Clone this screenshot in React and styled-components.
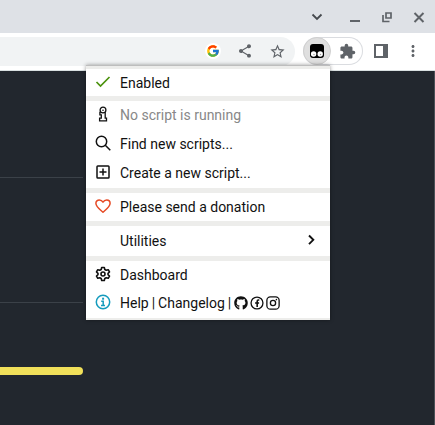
import React from "react";
import styled, { createGlobalStyle, css } from "styled-components";
import { FcGoogle } from "react-icons/fc";
import { MdShare, MdStarBorder, MdExtension, MdMoreVert } from "react-icons/md";
import { FaGithub } from "react-icons/fa";

const GlobalStyle = createGlobalStyle`
  *, *::before, *::after { box-sizing: border-box; }
  body { margin: 0; font-family: Roboto, "Liberation Sans", sans-serif; }
  button { font: inherit; color: inherit; background: none; border: 0; padding: 0; cursor: pointer; }
  a { color: inherit; text-decoration: none; }
  svg { display: block; flex: none; }
`;

const Window = styled.div`
  display: flex;
  flex-direction: column;
  min-height: 100vh;
  background: #22272e;
`;

const TitleBar = styled.header`
  display: flex;
  justify-content: flex-end;
  height: 33px;
  background: #dee1e6;
  color: #5f6368;
`;

const WindowButton = styled.button`
  display: grid;
  place-items: center;
  width: 32px;
  height: 33px;
  margin-right: ${(p) => (p.$spaced ? "6px" : 0)};
  color: ${(p) => (p.$spaced ? "#45494e" : "inherit")};
`;

const Toolbar = styled.div`
  position: relative;
  z-index: 1;
  display: flex;
  align-items: center;
  height: 38px;
  padding: 0 6px 1px 0;
  background: #fff;
  border-bottom: 1px solid #d9e0e1;
  color: #5f6368;
`;

const AddressBar = styled.div`
  display: flex;
  flex: 1;
  align-items: center;
  justify-content: flex-end;
  height: 29px;
  padding-right: 2px;
  background: #f1f3f4;
  border-radius: 0 15px 15px 0;
`;

const IconButton = styled.button`
  display: grid;
  place-items: center;
  width: 32px;
  height: 28px;
`;

const GoogleBadge = styled.span`
  display: grid;
  place-items: center;
  width: 16px;
  height: 16px;
  border-radius: 50%;
  background: #fff;
`;

const Extensions = styled.div`
  display: flex;
  height: 28px;
  margin: 0 2px 0 8px;
  border-radius: 14px;
  box-shadow: inset 0 0 0 1px #dadce0;
`;

const ExtensionButton = styled.button`
  display: grid;
  place-items: center;
  width: ${(p) => (p.$active ? "28px" : "32px")};
  height: 28px;
  border-radius: 50%;
  ${(p) => p.$active && css`
    background: #dfdfdf;
    border: 1px solid #cfcfcf;
  `}
`;

const Menu = styled.nav`
  position: absolute;
  top: 32px;
  right: 105px;
  display: flex;
  flex-direction: column;
  gap: 5px;
  width: 244px;
  padding: 3px 0 2px;
  background: #ededeb;
  border-top: 1px solid #bdbdbd;
  box-shadow: 0 0 4px rgba(0, 0, 0, 0.4);
  color: #111;
  font-size: 14px;
  line-height: 20px;
`;

const MenuGroup = styled.div`
  display: flex;
  flex-direction: column;
  gap: ${(p) => (p.$spaced ? "1px" : 0)};
  padding: ${(p) => (p.$roomy ? "1px 0" : p.$spaced ? "0 0 1px" : 0)};
  background: #fff;

  &:last-child { padding-bottom: 1px; }
`;

const rowStyle = css`
  display: grid;
  grid-template-columns: 16px 1fr auto;
  column-gap: 9px;
  align-items: center;
  width: 100%;
  height: ${(p) => (p.$short ? "27px" : "28px")};
  padding: 0 11px 0 9px;
  text-align: left;
  white-space: nowrap;
`;

const MenuItem = styled.button`
  ${rowStyle}
  &:disabled { color: #888; cursor: default; }
`;

const LinkRow = styled.div`
  ${rowStyle}
`;

const ItemIcon = styled.span`
  display: grid;
  place-items: center;
  width: 16px;
  height: 16px;
  margin-bottom: 2px;
  color: ${(p) => p.$color || "#111"};
`;

const Links = styled.span`
  display: flex;
  align-items: center;
`;

const Bar = styled.span`
  padding: 0 3px;
`;

const SocialLink = styled.a`
  margin-right: 2px;
`;

const Page = styled.main`
  flex: 1;
  border-right: 1px solid #4b5056;
`;

const Column = styled.div`
  margin-right: 351px;
`;

const Section = styled.section`
  height: ${(p) => (p.$first ? "107px" : "125px")};
  border-bottom: 1px solid #3b4148;
`;

const LanguageBar = styled.div`
  height: 8px;
  margin-top: 64px;
  background: #f1e05a;
  border-radius: 0 4px 4px 0;
`;

const Svg = ({ size = 16, width = 1.5, children, ...rest }) => (
  <svg width={size} height={size} viewBox="0 0 16 16" fill="none" stroke="currentColor" strokeWidth={width} aria-hidden="true" {...rest}>
    {children}
  </svg>
);

const ChevronDown = () => <Svg width={1.8}><path d="M3.500 5.500 8 10l4.500-4.500" /></Svg>;
const Minimize = () => <Svg width={2}><path d="M3 12h10" /></Svg>;
const Restore = () => <Svg width={1.7}><path d="M7 4h5v5H7zM4 6v6.500h6.500" /></Svg>;
const Close = () => <Svg width={2}><path d="m3.500 4 9 9m0-9-9 9" /></Svg>;

const Tampermonkey = () => (
  <Svg stroke="none">
    <path fill="#000" d="M4 1h8q3 0 3 3v8q0 3-3 3H4q-3 0-3-3V4q0-3 3-3z" />
    <circle cx="4.600" cy="11" r="2.700" fill="#fff" />
    <circle cx="11.200" cy="11" r="2.700" fill="#fff" />
    <circle cx="5" cy="11.500" r=".7" fill="#999" />
    <circle cx="11.500" cy="11.500" r=".7" fill="#999" />
  </Svg>
);

const SidePanel = () => (
  <Svg stroke="none">
    <path fill="currentColor" fillRule="evenodd" d="M1 1h14v14H1zM3 3v10h7V3z" />
  </Svg>
);

const Check = () => <Svg width={1.7}><path d="m1.500 8 4 4 9-9" /></Svg>;

const RunningInfo = () => (
  <Svg width={1.3}>
    <circle cx="8" cy="4" r="2.900" />
    <path d="M5.700 6.500H4.900v2.300h1.400v3.400H4.600v2.600h6.900v-2.600h-1.300V6.200" />
    <circle cx="8" cy="4.200" r=".8" fill="currentColor" stroke="none" />
  </Svg>
);

const Search = () => <Svg><circle cx="6.500" cy="6.500" r="5.200" /><path d="m10.300 10.300 5 5" /></Svg>;
const AddBox = () => <Svg><rect x="2" y="2" width="12" height="12" rx=".8" /><path d="M8 4.500v7M4.500 8h7" /></Svg>;
const Heart = () => <Svg><path strokeLinejoin="round" d="M8 14.200C5.500 12 .9 9 .9 5.300.9 3.300 2.500 1.900 4.300 1.900 5.900 1.900 7.200 2.700 8 4.100c.8-1.400 2.100-2.200 3.700-2.200 1.800 0 3.400 1.400 3.400 3.400C15.100 9 10.500 12 8 14.200z" /></Svg>;
const ChevronRight = () => <Svg width={1.9}><path d="m6 3.500 4.300 4.300L6 12.100" /></Svg>;

const Gear = () => (
  <Svg width={1.6}>
    <path strokeLinejoin="round" d="M6.700 1.500h2.600l.5 2 1.400.8 2-.6 1.300 2.300L13 7.400v1.200l1.500 1.400-1.300 2.300-2-.6-1.400.8-.5 2H6.700l-.5-2-1.400-.8-2 .6L1.500 10 3 8.600V7.400L1.500 6l1.300-2.300 2 .6 1.400-.8z" />
    <circle cx="8" cy="8" r="2" />
  </Svg>
);

const Info = () => (
  <Svg>
    <circle cx="8" cy="8" r="6.700" />
    <path d="M6.200 7.200h2v4.200M6 11.500h4" />
    <path strokeWidth="2" d="M7.100 4.700h2" />
  </Svg>
);

const Facebook = () => (
  <Svg size={14}>
    <circle cx="8" cy="8" r="6.800" />
    <path strokeWidth="1.800" d="M10.600 4.600H9.500q-1.300 0-1.300 1.500v6.400M5.800 8h4.600" />
  </Svg>
);

const Instagram = () => (
  <Svg size={14}>
    <rect x="1" y="1" width="14" height="14" rx="4" />
    <circle cx="8" cy="8" r="3" />
    <circle cx="11.900" cy="4.100" r=".9" fill="currentColor" stroke="none" />
  </Svg>
);

const Item = ({ icon, color, children, trailing, short, ...rest }) => (
  <MenuItem type="button" $short={short} {...rest}>
    <ItemIcon $color={color}>{icon}</ItemIcon>
    <span>{children}</span>
    {trailing && <ItemIcon>{trailing}</ItemIcon>}
  </MenuItem>
);

export default function App() {
  return (
    <>
      <GlobalStyle />
      <Window>
        <TitleBar>
          <WindowButton aria-label="Search tabs" $spaced><ChevronDown /></WindowButton>
          <WindowButton aria-label="Minimize"><Minimize /></WindowButton>
          <WindowButton aria-label="Restore"><Restore /></WindowButton>
          <WindowButton aria-label="Close"><Close /></WindowButton>
        </TitleBar>
        <Toolbar>
          <AddressBar>
            <IconButton aria-label="Google"><GoogleBadge><FcGoogle size={14} /></GoogleBadge></IconButton>
            <IconButton aria-label="Share"><MdShare size={16} /></IconButton>
            <IconButton aria-label="Bookmark"><MdStarBorder size={17} /></IconButton>
          </AddressBar>
          <Extensions>
            <ExtensionButton aria-label="Tampermonkey" $active><Tampermonkey /></ExtensionButton>
            <ExtensionButton aria-label="Extensions"><MdExtension size={17} /></ExtensionButton>
          </Extensions>
          <IconButton aria-label="Side panel"><SidePanel /></IconButton>
          <IconButton aria-label="More"><MdMoreVert size={18} /></IconButton>
          <Menu aria-label="Tampermonkey">
            <MenuGroup>
              <Item icon={<Check />} color="#4b920d" short>Enabled</Item>
            </MenuGroup>
            <MenuGroup $spaced>
              <Item icon={<RunningInfo />} disabled>No script is running</Item>
              <Item icon={<Search />}>Find new scripts...</Item>
              <Item icon={<AddBox />}>Create a new script...</Item>
            </MenuGroup>
            <MenuGroup>
              <Item icon={<Heart />} color="#e64a25">Please send a donation</Item>
            </MenuGroup>
            <MenuGroup $roomy>
              <Item trailing={<ChevronRight />}>Utilities</Item>
            </MenuGroup>
            <MenuGroup>
              <Item icon={<Gear />}>Dashboard</Item>
              <LinkRow>
                <ItemIcon $color="#159bbd"><Info /></ItemIcon>
                <Links>
                  <a href="#help">Help</a><Bar>|</Bar>
                  <a href="#changelog">Changelog</a><Bar>|</Bar>
                  <SocialLink href="#github" aria-label="GitHub"><FaGithub size={14} /></SocialLink>
                  <SocialLink href="#facebook" aria-label="Facebook"><Facebook /></SocialLink>
                  <SocialLink href="#instagram" aria-label="Instagram"><Instagram /></SocialLink>
                </Links>
              </LinkRow>
            </MenuGroup>
          </Menu>
        </Toolbar>
        <Page>
          <Column>
            <Section $first />
            <Section />
            <LanguageBar />
          </Column>
        </Page>
      </Window>
    </>
  );
}
